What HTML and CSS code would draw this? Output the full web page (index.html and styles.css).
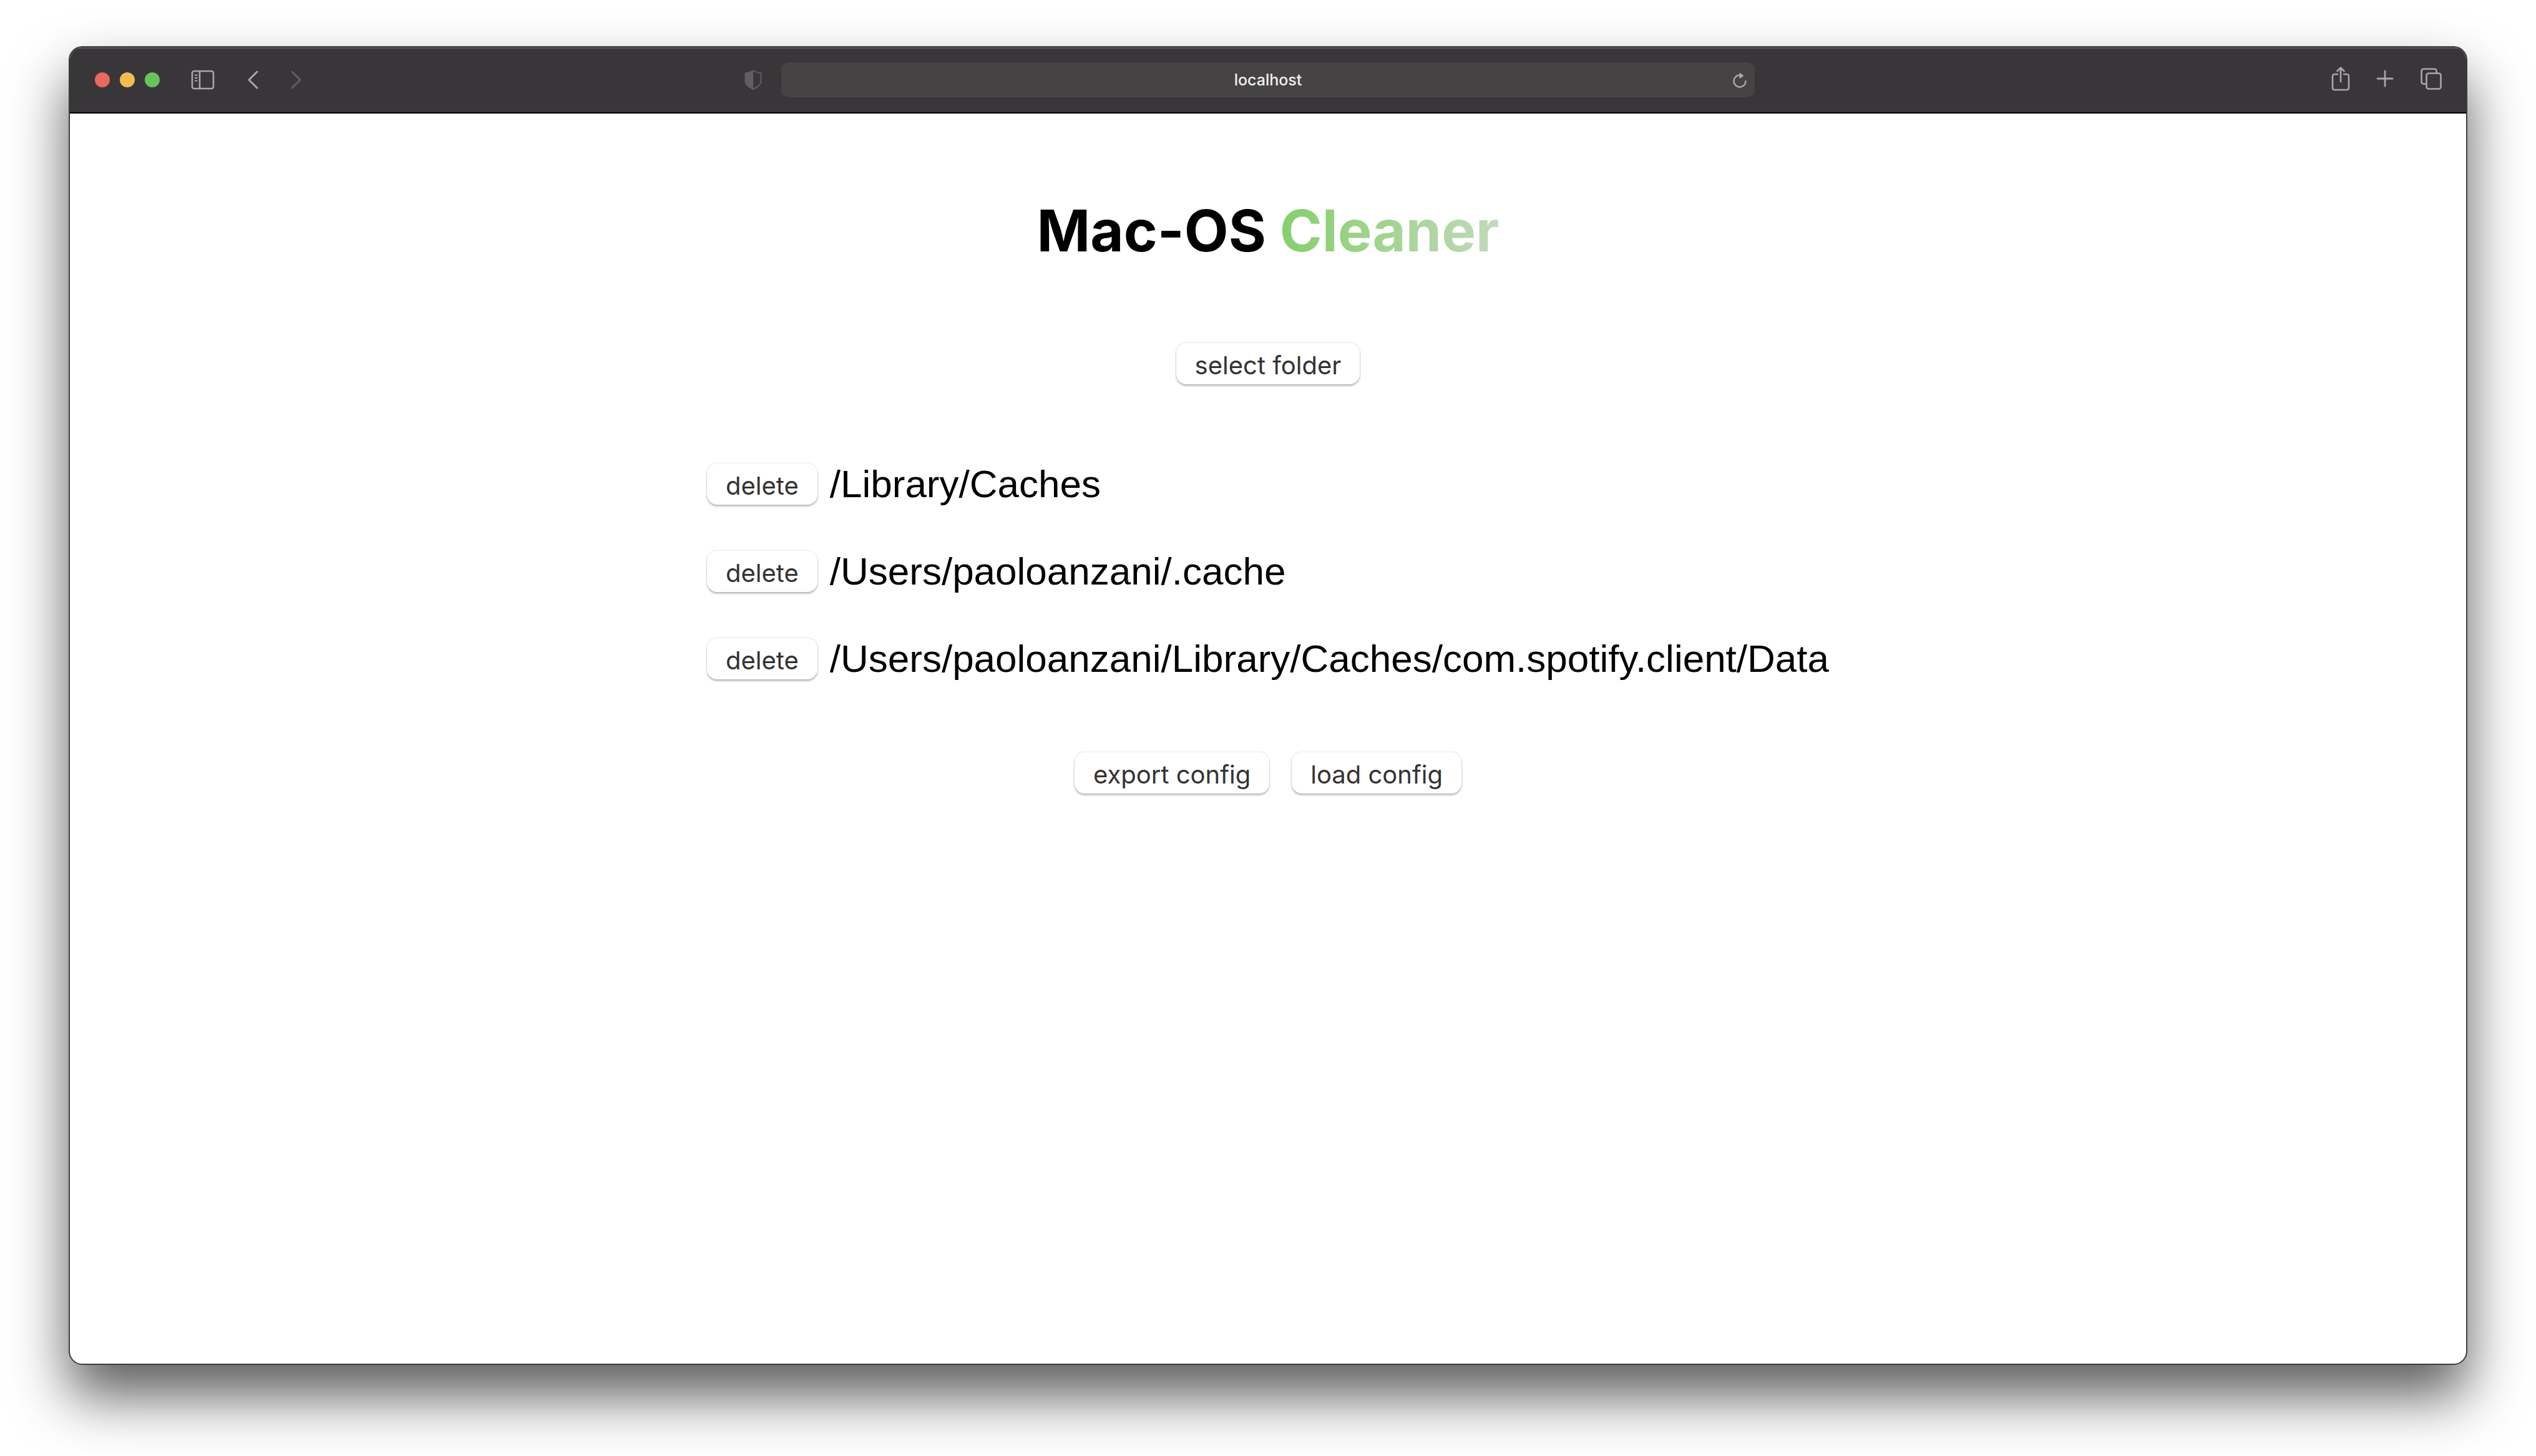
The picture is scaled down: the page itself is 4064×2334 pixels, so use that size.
FILE: index.html
```html
<!DOCTYPE html>
<html lang="en">
<head>
<meta charset="utf-8">
<meta name="viewport" content="width=device-width, initial-scale=1">
<title>Mac-OS Cleaner</title>
<link rel="stylesheet" href="styles.css">
</head>
<body>
<div class="window">
  <header class="toolbar">
    <div class="toolbar-side">
      <div class="lights">
        <button class="light light-close" aria-label="Close"></button>
        <button class="light light-minimize" aria-label="Minimize"></button>
        <button class="light light-zoom" aria-label="Zoom"></button>
      </div>
      <button class="tool" aria-label="Sidebar">
        <svg width="38" height="32" viewBox="0 0 38 32" fill="none" stroke="currentColor">
          <rect x="2" y="2" width="34" height="28" rx="3" stroke-width="2.6"/>
          <path d="M14 2v28" stroke-width="2.6"/>
          <path d="M6 8.500h4.500M6 13h4.500M6 17.500h4.500" stroke-width="2"/>
        </svg>
      </button>
      <div class="history">
        <button class="tool" aria-label="Back">
          <svg width="18" height="30" viewBox="0 0 18 30" fill="none" stroke="currentColor" stroke-width="3" stroke-linecap="round" stroke-linejoin="round"><path d="M16 2 3 15l13 13"/></svg>
        </button>
        <button class="tool tool-dim" aria-label="Forward">
          <svg width="18" height="30" viewBox="0 0 18 30" fill="none" stroke="currentColor" stroke-width="3" stroke-linecap="round" stroke-linejoin="round"><path d="m2 2 13 13L2 28"/></svg>
        </button>
      </div>
      <button class="tool tool-dim tool-shield" aria-label="Privacy report">
        <svg width="30" height="34" viewBox="0 0 30 34" fill="none" stroke="currentColor">
          <path d="M15 2c4 2.500 8 3.500 12.500 4.500v14c0 4-5.500 8-12.500 11.500C8 28.500 2.500 24.500 2.500 20.500v-14C7 5.500 11 4.500 15 2z" stroke-width="2"/>
          <path d="M15 2v30C8 28.500 2.500 24.500 2.500 20.500v-14C7 5.500 11 4.500 15 2z" fill="currentColor" stroke="none"/>
        </svg>
      </button>
    </div>
    <div class="address">
      <input class="address-input" type="text" value="localhost" aria-label="Address">
      <button class="tool address-reload" aria-label="Reload">
        <svg width="24" height="26" viewBox="0 0 24 26" fill="none" stroke="currentColor">
          <path d="M21.500 14a9.500 9.500 0 1 1-9.500-9.500h2" stroke-width="2.400" stroke-linecap="round"/>
          <path d="M12 1v8.500L18 5.500z" fill="currentColor" stroke-width="1" stroke-linejoin="round"/>
        </svg>
      </button>
    </div>
    <div class="toolbar-side toolbar-end">
      <button class="tool" aria-label="Share">
        <svg width="30" height="40" viewBox="0 0 30 40" fill="none" stroke="currentColor" stroke-width="2.600" stroke-linecap="round" stroke-linejoin="round">
          <path d="M10 13H5a3 3 0 0 0-3 3v19a3 3 0 0 0 3 3h20a3 3 0 0 0 3-3V16a3 3 0 0 0-3-3h-5"/>
          <path d="M15 25V3M9.500 8 15 2.500 20.500 8"/>
        </svg>
      </button>
      <button class="tool" aria-label="New tab">
        <svg width="28" height="28" viewBox="0 0 28 28" fill="none" stroke="currentColor" stroke-width="2.800" stroke-linecap="round"><path d="M14 2v24M2 14h24"/></svg>
      </button>
      <button class="tool" aria-label="Tab overview">
        <svg width="36" height="36" viewBox="0 0 36 36" fill="none" stroke="currentColor" stroke-width="2.600" stroke-linejoin="round">
          <rect x="10.500" y="9.500" width="23" height="25" rx="3.500"/>
          <path d="M10 26.500H6A3.500 3.500 0 0 1 2.500 23V6A3.500 3.500 0 0 1 6 2.500h17A3.500 3.500 0 0 1 26.500 6v3"/>
        </svg>
      </button>
    </div>
  </header>
  <main class="content">
    <h1 class="title">Mac-OS <span class="title-accent">Cleaner</span></h1>
    <button class="button">select folder</button>
    <ul class="folders">
      <li class="folder"><button class="button">delete</button><span class="path">/Library/Caches</span></li>
      <li class="folder"><button class="button">delete</button><span class="path">/Users/paoloanzani/.cache</span></li>
      <li class="folder"><button class="button">delete</button><span class="path">/Users/paoloanzani/Library/Caches/com.spotify.client/Data</span></li>
    </ul>
    <div class="actions">
      <button class="button">export config</button>
      <button class="button">load config</button>
    </div>
  </main>
</div>
</body>
</html>
```
FILE: styles.css
```css
* {
  box-sizing: border-box;
}

body {
  display: flex;
  min-height: 100vh;
  margin: 0;
  padding: 74px 110px 146px;
  background: #fff;
  color: #000;
  font-family: Inter, "Liberation Sans", sans-serif;
}

button,
input {
  margin: 0;
  padding: 0;
  border: 0;
  font: inherit;
}

.window {
  display: flex;
  flex: 1;
  flex-direction: column;
  min-width: 0;
  overflow: hidden;
  border: 2px solid #3c3c3c;
  border-radius: 22px;
  background: #fff;
  box-shadow: 0 50px 90px rgba(0, 0, 0, 0.64);
}

.toolbar {
  display: grid;
  grid-template-columns: minmax(0, 1fr) minmax(0, 1560px) minmax(0, 1fr);
  align-items: center;
  height: 106px;
  padding-bottom: 2px;
  border-top: 2px solid #565557;
  border-bottom: 2px solid #000;
  background: #393639;
}

.toolbar-side {
  display: flex;
  align-items: center;
  padding: 0 30px 0 40px;
}

.toolbar-end {
  justify-content: flex-end;
  gap: 42px;
  padding: 0 38px 4px;
}

.lights {
  display: flex;
  gap: 16px;
  margin-right: 50px;
}

.light {
  width: 24px;
  height: 24px;
  border-radius: 50%;
}

.light-close {
  background: #e9695e;
}

.light-minimize {
  background: #f2bd50;
}

.light-zoom {
  background: #65c558;
}

.tool {
  display: flex;
  background: none;
  color: #a9a7a9;
}

.tool-dim {
  color: #605e61;
}

.tool-shield {
  margin-left: auto;
}

.history {
  display: flex;
  gap: 52px;
  margin-left: 52px;
}

.address {
  display: flex;
  position: relative;
}

.address-input {
  width: 100%;
  height: 56px;
  border-radius: 12px;
  background: #464344;
  color: #f0f0f0;
  font-size: 25px;
  font-weight: 500;
  text-align: center;
}

.address-reload {
  position: absolute;
  top: 16px;
  right: 12px;
}

.content {
  display: flex;
  flex-direction: column;
  align-items: center;
  padding: 128px 32px;
}

.title {
  margin: 0 0 120px;
  font-size: 92px;
  font-weight: 700;
  line-height: 120px;
}

.title-accent {
  background: linear-gradient(90deg, #86cf6c, #c2d9ba);
  background-clip: text;
  color: transparent;
}

.button {
  height: 66px;
  padding: 6px 30px 0;
  border-radius: 16px;
  background: #fff;
  box-shadow: 0 0 3px rgba(0, 0, 0, 0.2), 0 3px 3px rgba(0, 0, 0, 0.22);
  color: #333;
  font-size: 40px;
  line-height: 60px;
  white-space: nowrap;
}

.folders {
  display: flex;
  flex-direction: column;
  gap: 60px;
  margin: 120px 0 110px;
  padding: 0;
  list-style: none;
}

.folder {
  display: flex;
  align-items: center;
  gap: 20px;
}

.path {
  font-family: "Liberation Sans", Arial, sans-serif;
  font-size: 62px;
  line-height: 80px;
}

.actions {
  display: flex;
  gap: 36px;
}
```
